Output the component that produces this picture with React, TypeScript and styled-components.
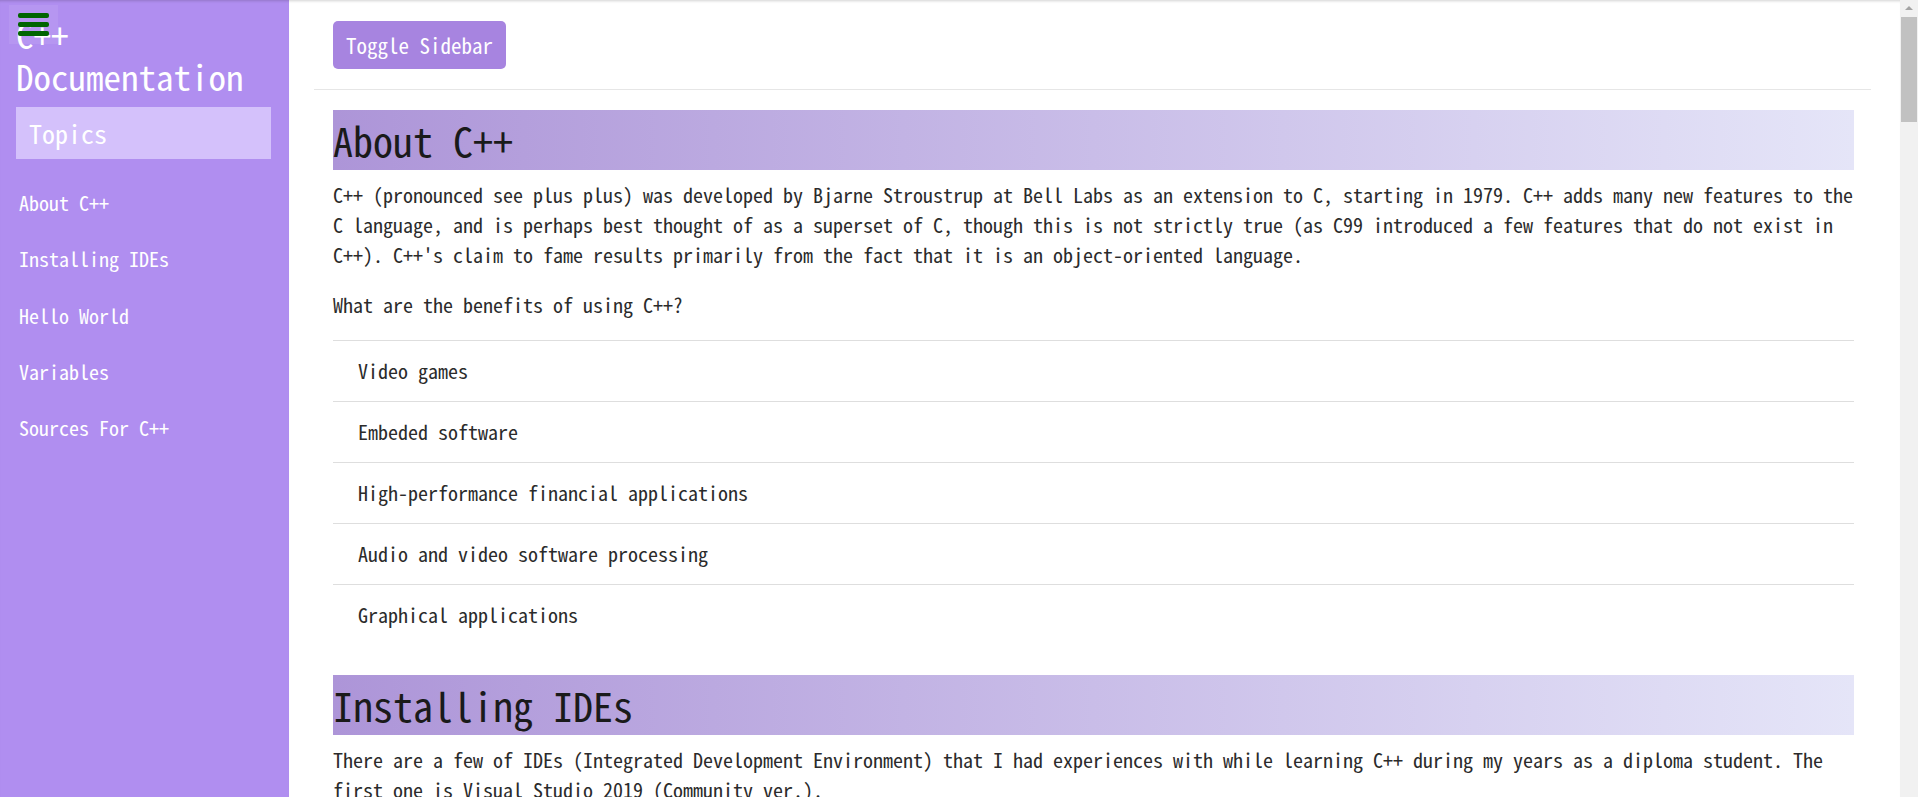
import React, { useState } from "react";
import styled, { createGlobalStyle } from "styled-components";

const FONT = `"Noto Sans Mono CJK JP", "Liberation Mono", monospace`;

const GlobalStyle = createGlobalStyle`
  html, body {
    margin: 0;
    padding: 0;
  }
  body {
    font-family: ${FONT};
    font-size: 20px;
    color: #212529;
    background: #fff;
  }
  * {
    box-sizing: border-box;
  }
`;

const topics = [
  { id: "about", label: "About C++" },
  { id: "ides", label: "Installing IDEs" },
  { id: "hello", label: "Hello World" },
  { id: "variables", label: "Variables" },
  { id: "sources", label: "Sources For C++" },
];

const benefits = [
  "Video games",
  "Embeded software",
  "High-performance financial applications",
  "Audio and video software processing",
  "Graphical applications",
];

export default function App() {
  const [open, setOpen] = useState(true);

  return (
    <>
      <GlobalStyle />
      <Menu aria-label="menu" onClick={() => setOpen(!open)}>
        <Bar />
        <Bar />
        <Bar />
      </Menu>
      <Scrollbar>
        <Arrow />
        <Thumb />
      </Scrollbar>
      <Layout>
        {open && (
          <Sidebar>
            <SideTitle>C++ Documentation</SideTitle>
            <TopicsBox>Topics</TopicsBox>
            <Nav>
              {topics.map((t) => (
                <NavLink key={t.id} href={`#${t.id}`}>
                  {t.label}
                </NavLink>
              ))}
            </Nav>
          </Sidebar>
        )}
        <Main>
          <Toolbar>
            <ToggleButton onClick={() => setOpen(!open)}>Toggle Sidebar</ToggleButton>
          </Toolbar>
          <Article>
            <Section id="about">
              <Heading>About C++</Heading>
              <Text>
                C++ (pronounced see plus plus) was developed by Bjarne Stroustrup at Bell Labs as an
                extension to C, starting in 1979. C++ adds many new features to the C language, and is
                perhaps best thought of as a superset of C, though this is not strictly true (as C99
                introduced a few features that do not exist in C++). C++'s claim to fame results
                primarily from the fact that it is an object-oriented language.
              </Text>
              <Text>What are the benefits of using C++?</Text>
              <List>
                {benefits.map((b) => (
                  <Item key={b}>{b}</Item>
                ))}
              </List>
            </Section>
            <Section id="ides">
              <Heading>Installing IDEs</Heading>
              <Text>
                There are a few of IDEs (Integrated Development Environment) that I had experiences with
                while learning C++ during my years as a diploma student. The first one is Visual Studio
                2019 (Community ver.).
              </Text>
              <Text>
                The second one is Code::Blocks, a free and open-source IDE that is light to install and
                easy to set up for beginners.
              </Text>
            </Section>
            <Section id="hello">
              <Heading>Hello World</Heading>
              <Text>
                The first program that most people write is a program that prints "Hello World" on the
                screen.
              </Text>
            </Section>
            <Section id="variables">
              <Heading>Variables</Heading>
              <Text>
                A variable is a name given to a memory location. It is the basic unit of storage in a
                program.
              </Text>
            </Section>
            <Section id="sources">
              <Heading>Sources For C++</Heading>
              <Text>cplusplus.com, learncpp.com and cppreference.com</Text>
            </Section>
          </Article>
        </Main>
      </Layout>
    </>
  );
}

const Menu = styled.button`
  position: fixed;
  top: 5px;
  left: 9px;
  z-index: 10;
  display: flex;
  flex-direction: column;
  gap: 4px;
  padding: 8px 9px;
  border: none;
  background: rgba(255, 255, 255, 0.08);
  cursor: pointer;
`;

const Bar = styled.span`
  display: block;
  width: 31px;
  height: 5px;
  border-radius: 2px;
  background: #006400;
`;

const Scrollbar = styled.div`
  position: fixed;
  top: 0;
  right: 0;
  z-index: 20;
  width: 18px;
  height: 100vh;
  background: #f1f1f1;
`;

const Arrow = styled.div`
  width: 0;
  height: 0;
  margin: 6px auto 0;
  border-left: 4px solid transparent;
  border-right: 4px solid transparent;
  border-bottom: 4px solid #a3a3a3;
`;

const Thumb = styled.div`
  margin: 7px 1px 0;
  height: 105px;
  background: #c1c1c1;
`;

const Layout = styled.div`
  display: flex;
  min-height: 100vh;
  padding-right: 18px;
`;

const Sidebar = styled.aside`
  position: sticky;
  top: 0;
  align-self: flex-start;
  width: 289px;
  flex-shrink: 0;
  height: 100vh;
  padding: 13px 18px 0 16px;
  background: #b08ef0;
  color: #fff;
  box-shadow: inset 0 3px 3px -2px rgba(0, 0, 0, 0.18);
`;

const SideTitle = styled.h1`
  margin: 0;
  font-size: 35px;
  font-weight: 400;
  line-height: 42px;
`;

const TopicsBox = styled.div`
  margin-top: 10px;
  height: 52px;
  padding-left: 13px;
  background: #d4c1fb;
  font-size: 26px;
  line-height: 52px;
`;

const Nav = styled.nav`
  display: flex;
  flex-direction: column;
  margin-top: 16px;
  margin-left: -13px;
`;

const NavLink = styled.a`
  display: block;
  padding: 13px 0 13px 16px;
  color: #fff;
  font-size: 20px;
  line-height: 30.3px;
  text-decoration: none;
`;

const Main = styled.main`
  flex: 1;
  min-width: 0;
  padding: 0 29px 0 25px;
  box-shadow: inset 0 3px 3px -2px rgba(0, 0, 0, 0.18);
`;

const Toolbar = styled.div`
  padding: 21px 0 20px 19px;
  border-bottom: 1px solid #e6e6e6;
`;

const ToggleButton = styled.button`
  height: 48px;
  padding: 0 13px;
  border: none;
  border-radius: 5px;
  background: #a784e0;
  color: #fff;
  font-family: ${FONT};
  font-size: 21px;
  line-height: 30px;
  cursor: pointer;
`;

const Article = styled.div`
  padding: 20px 17px 40px 19px;
`;

const Section = styled.section`
  margin-bottom: 30px;
`;

const Heading = styled.h2`
  margin: 0 0 10px;
  height: 60px;
  font-size: 40px;
  font-weight: 400;
  line-height: 60px;
  color: #1a1a1a;
  background: linear-gradient(to right, #ad95d8, #e5e5f8);
`;

const Text = styled.p`
  margin: 0 0 20px;
  font-size: 20px;
  line-height: 30px;
  color: #2b2b2b;
`;

const List = styled.ul`
  margin: 0;
  padding: 0;
  list-style: none;
  border-top: 1px solid #dedede;
`;

const Item = styled.li`
  padding: 15px 25px;
  font-size: 20px;
  line-height: 30px;
  color: #2b2b2b;
  border-bottom: 1px solid #dedede;

  &:last-child {
    border-bottom: none;
  }
`;
